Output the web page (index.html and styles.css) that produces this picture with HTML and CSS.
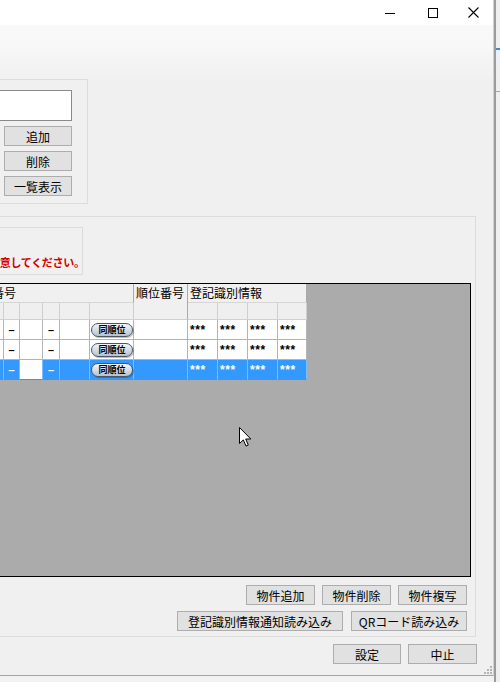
FILE: index.html
```html
<!DOCTYPE html>
<html lang="ja">
<head>
<meta charset="utf-8">
<title>物件</title>
<link rel="stylesheet" href="styles.css">
</head>
<body>
<div class="screen">
  <div class="window">
    <div class="titlebar">
      <span class="cap cap-min"><svg width="10" height="10" viewBox="0 0 10 10"><path d="M0 5.5H10" stroke="#000" stroke-width="1"/></svg></span>
      <span class="cap cap-max"><svg width="10" height="10" viewBox="0 0 10 10"><rect x="0.5" y="0.5" width="9" height="9" fill="none" stroke="#000" stroke-width="1"/></svg></span>
      <span class="cap cap-close"><svg width="11" height="11" viewBox="0 0 11 11"><path d="M0.5 0.5L10.5 10.5M10.5 0.5L0.5 10.5" stroke="#000" stroke-width="1.1"/></svg></span>
    </div>
    <div class="toolbar"></div>
    <div class="content">
      <div class="group group1">
        <div class="textbox"></div>
        <button class="btn btn-side">追加</button>
        <button class="btn btn-side">削除</button>
        <button class="btn btn-side">一覧表示</button>
      </div>
      <div class="group group2">
        <div class="notice"><span class="warn">注意してください。</span></div>
        <div class="grid-wrap">
          <div class="grid">
            <div class="hc h-num">番号</div>
            <div class="hc h-rank">順位番号</div>
            <div class="hc h-reg">登記識別情報</div>
            <div class="sc"></div><div class="sc"></div><div class="sc"></div><div class="sc"></div><div class="sc"></div><div class="sc"></div>
            <div class="sc"></div><div class="sc"></div><div class="sc"></div><div class="sc"></div>

            <div class="dc"></div><div class="dc dash">–</div><div class="dc"></div><div class="dc dash">–</div><div class="dc"></div><div class="dc"><span class="pill">同順位</span></div><div class="dc"></div><div class="dc ast">***</div><div class="dc ast">***</div><div class="dc ast">***</div><div class="dc ast">***</div>

            <div class="dc"></div><div class="dc dash">–</div><div class="dc"></div><div class="dc dash">–</div><div class="dc"></div><div class="dc"><span class="pill">同順位</span></div><div class="dc"></div><div class="dc ast">***</div><div class="dc ast">***</div><div class="dc ast">***</div><div class="dc ast">***</div>

            <div class="dc sel"></div><div class="dc sel dash">–</div><div class="dc sel white"></div><div class="dc sel dash">–</div><div class="dc sel"></div><div class="dc sel"><span class="pill">同順位</span></div><div class="dc sel"></div><div class="dc sel ast">***</div><div class="dc sel ast">***</div><div class="dc sel ast">***</div><div class="dc sel ast">***</div>
          </div>
        </div>
        <div class="btn-row row1">
          <button class="btn w69">物件追加</button>
          <button class="btn w69">物件削除</button>
          <button class="btn w69">物件複写</button>
        </div>
        <div class="btn-row row2">
          <button class="btn w166">登記識別情報通知読み込み</button>
          <button class="btn w116">QRコード読み込み</button>
        </div>
      </div>
      <div class="footer">
        <button class="btn w68">設定</button>
        <button class="btn w69">中止</button>
      </div>
    </div>
  </div>
  <div class="neighbor">
    <div class="nb-blue"></div>
    <div class="nb-tick"></div>
  </div>
  <svg class="mouse" width="13" height="20" viewBox="0 0 13 20"><path d="M0.5 0.5V16.5L4.3 12.9L7 19L9.3 18L6.7 12H11.8Z" fill="#fff" stroke="#000" stroke-width="1" stroke-linejoin="miter"/></svg>
  <svg class="grip" width="8" height="8" viewBox="0 0 8 8"><g fill="#b4b4b4"><rect x="6" y="0" width="2" height="2"/><rect x="3" y="3" width="2" height="2"/><rect x="6" y="3" width="2" height="2"/><rect x="0" y="6" width="2" height="2"/><rect x="3" y="6" width="2" height="2"/><rect x="6" y="6" width="2" height="2"/></g></svg>
</div>
</body>
</html>
```
FILE: styles.css
```css
* { box-sizing: border-box; }
html, body { margin: 0; padding: 0; }
body {
  width: 500px;
  height: 682px;
  overflow: hidden;
  background: #f2f2f2;
  font-family: "Noto Sans CJK JP", "Noto Sans", sans-serif;
  font-size: 12px;
  color: #000;
}
.screen {
  position: relative;
  display: flex;
  width: 500px;
  height: 682px;
}
.window {
  width: 494px;
  height: 676px;
  flex: none;
  display: flex;
  flex-direction: column;
  background: #f0f0f0;
  border-right: 1px solid #d2d2d2;
  border-bottom: 1px solid #a4a4a4;
  overflow: hidden;
}
.titlebar {
  height: 25px;
  flex: none;
  background: #fff;
  display: flex;
  justify-content: flex-end;
}
.cap {
  height: 25px;
  display: flex;
  align-items: center;
  justify-content: center;
}
.cap-min, .cap-max { width: 43px; }
.cap-close { width: 39px; }
.toolbar {
  height: 54px;
  flex: none;
  background: linear-gradient(to bottom, #f9f9f9 0%, #f8f8f8 42%, #f5f5f5 60%, #f1f1f1 100%);
}
.content {
  flex: 1;
  display: flex;
  flex-direction: column;
  padding-right: 16px;
}
.group {
  border: 1px solid #dcdcdc;
  margin-left: -20px;
  flex: none;
}
.group1 {
  width: 108px;
  height: 125px;
  padding: 10px 15px 0 0;
  display: flex;
  flex-direction: column;
  align-items: flex-end;
}
.textbox {
  width: 100%;
  height: 31px;
  background: #fff;
  border: 1px solid #8a8a8a;
}
.btn {
  height: 20px;
  margin: 0;
  padding: 0;
  background: #e1e1e1;
  border: 1px solid #adadad;
  border-radius: 0;
  font-family: "Noto Sans CJK JP", "Noto Sans", sans-serif;
  font-size: 12px;
  line-height: 17px;
  color: #000;
  text-align: center;
  white-space: nowrap;
}
.btn-side { width: 68px; margin-top: 5px; }
.w68 { width: 68px; }
.w69 { width: 69px; }
.w166 { width: 166px; }
.w116 { width: 116px; }
.group2 {
  width: 496px;
  margin-top: 12px;
  padding: 10px 4px 5px 0;
  display: flex;
  flex-direction: column;
}
.notice {
  width: 102px;
  height: 48px;
  border: 1px solid #dcdcdc;
  background: #f0f0f0;
  display: flex;
  align-items: flex-end;
  padding: 0 0 5px 7px;
  overflow: hidden;
}
.warn {
  color: #d40000;
  font-weight: bold;
  font-size: 11px;
  line-height: 14px;
  letter-spacing: -0.3px;
  white-space: nowrap;
}
.grid-wrap {
  margin-top: 8px;
  height: 294px;
  border: 1px solid #000;
  background: #ababab;
  overflow: hidden;
}
.grid {
  display: grid;
  grid-template-columns: 22px 16px 23px 17px 30px 44px 54px 30px 30px 30px 29px;
  grid-template-rows: 19px 17px 20px 20px 20px;
  width: max-content;
}
.hc {
  background: #f0f0f0;
  border-right: 1px solid #a9a9a9;
  font-size: 12px;
  line-height: 18px;
  white-space: nowrap;
  padding-left: 2px;
}
.h-num {
  grid-column: 1 / 7;
  grid-row: 1;
  padding-left: 10px;
  border-bottom: 1px solid #d6d6d6;
}
.h-rank {
  grid-column: 7;
  grid-row: 1 / 3;
  border-bottom: 1px solid #d0d0d0;
}
.h-reg {
  grid-column: 8 / 12;
  grid-row: 1;
  border-bottom: 1px solid #d6d6d6;
}
.sc {
  background: #efefef;
  border-right: 1px solid #cfcfcf;
  border-bottom: 1px solid #d0d0d0;
}
.dc {
  background: #fff;
  border-right: 1px solid #b4b4b4;
  border-bottom: 1px solid #b4b4b4;
  display: flex;
  align-items: center;
  white-space: nowrap;
}
.dash {
  justify-content: center;
  font-family: "Liberation Sans", sans-serif;
  font-weight: bold;
  font-size: 11px;
}
.ast {
  padding-left: 2px;
  font-family: "Liberation Sans", sans-serif;
  font-weight: bold;
  font-size: 12px;
  letter-spacing: 0.6px;
}
.sel {
  background: #3399ff;
  color: #fff;
  border-right-color: #7fbdf7;
  border-bottom-color: #3399ff;
}
.sel.white { background: #fff; }
.pill {
  margin-left: 1px;
  width: 42px;
  height: 14px;
  border: 1px solid #4d5660;
  border-radius: 7px;
  background: linear-gradient(to bottom, #f2f5f9 0%, #d5dde8 50%, #b5c1d0 100%);
  box-shadow: 1px 1px 0 rgba(0,0,0,0.25);
  color: #000;
  font-size: 9px;
  font-weight: bold;
  line-height: 12px;
  text-align: center;
}
.btn-row {
  display: flex;
  justify-content: flex-end;
  padding-right: 4px;
}
.row1 { margin-top: 8px; gap: 7px; }
.row2 { margin-top: 6px; gap: 8px; }
.footer {
  margin-top: 7px;
  display: flex;
  justify-content: flex-end;
  gap: 7px;
}
.neighbor {
  flex: 1;
  height: 682px;
  background: #efefef;
  border-left: 2px solid #9c9c9c;
}
.nb-blue {
  margin-top: 48px;
  height: 14px;
  border-top: 2px solid #4a86d4;
  background: #eaf1fb;
}
.nb-tick {
  margin-top: 29px;
  height: 1px;
  background: #a8a8a8;
}
.mouse {
  position: absolute;
  left: 239px;
  top: 427px;
}
.grip {
  position: absolute;
  left: 484px;
  top: 666px;
}
```
